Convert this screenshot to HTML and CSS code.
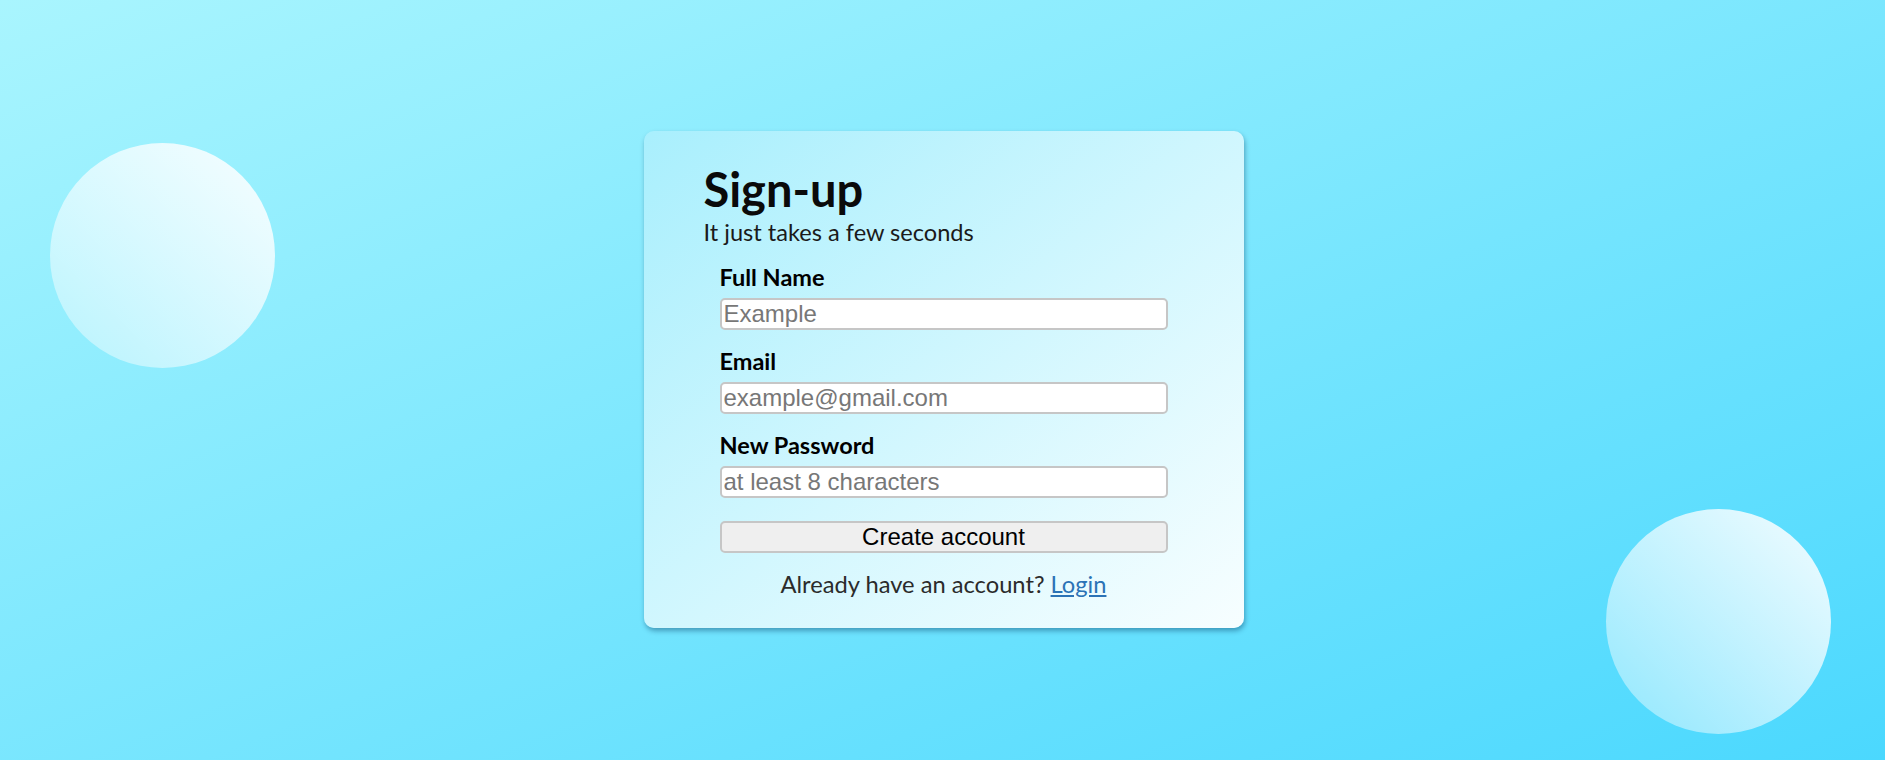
FILE: index.html
```html
<!DOCTYPE html>
<html lang="en">
<head>
<meta charset="utf-8">
<title>Sign-up</title>
<link rel="stylesheet" href="styles.css">
</head>
<body>
<div class="bubble bubble-left"></div>
<div class="bubble bubble-right"></div>
<main class="card">
  <header class="card-head">
    <h1 class="title">Sign-up</h1>
    <p class="subtitle">It just takes a few seconds</p>
  </header>
  <form class="form">
    <div class="field">
      <label class="label" for="name">Full Name</label>
      <input class="input" id="name" type="text" placeholder="Example">
    </div>
    <div class="field">
      <label class="label" for="email">Email</label>
      <input class="input" id="email" type="email" placeholder="example@gmail.com">
    </div>
    <div class="field">
      <label class="label" for="pass">New Password</label>
      <input class="input" id="pass" type="password" placeholder="at least 8 characters">
    </div>
    <button class="submit" type="button">Create account</button>
  </form>
  <p class="footer">Already have an account? <a class="link" href="#">Login</a></p>
</main>
</body>
</html>
```
FILE: styles.css
```css
html, body {
  margin: 0;
  padding: 0;
  height: 100%;
}

body {
  position: relative;
  overflow: hidden;
  min-height: 100vh;
  display: flex;
  align-items: center;
  justify-content: center;
  background: linear-gradient(to bottom right, #a9f5fe, #4bd8fe);
  font-family: Lato, "Noto Sans", sans-serif;
}

.bubble {
  position: absolute;
  width: 225px;
  height: 225px;
  border-radius: 50%;
  background: linear-gradient(to top right, rgba(255, 255, 255, 0.35), rgba(255, 255, 255, 0.92));
}

.bubble-left {
  left: 50px;
  top: 143px;
}

.bubble-right {
  left: 1606px;
  top: 509px;
}

.card {
  position: relative;
  width: 600px;
  box-sizing: border-box;
  padding: 32px 60px 30px 60px;
  border-radius: 10px;
  background: linear-gradient(to bottom right, #a9effd, #f7feff);
  box-shadow: 1px 3px 5px rgba(0, 50, 90, 0.4);
  margin-left: 2px;
  margin-top: -2px;
}

.card-head {
  margin-bottom: 17px;
}

.title {
  margin: 0;
  font-size: 47px;
  font-weight: 700;
  line-height: 53px;
  color: #0a0a0a;
}

.subtitle {
  margin: 2px 0 0 0;
  font-size: 23.6px;
  line-height: 28px;
  color: #1a1a1a;
}

.form {
  display: flex;
  flex-direction: column;
  width: 448px;
  margin: 0 auto;
}

.field {
  display: flex;
  flex-direction: column;
  margin-bottom: 17px;
}

.field:last-of-type {
  margin-bottom: 23px;
}

.label {
  font-size: 23.5px;
  font-weight: 700;
  line-height: 28px;
  color: #000;
  margin-bottom: 7px;
}

.input {
  box-sizing: border-box;
  height: 32px;
  width: 100%;
  margin: 0;
  padding: 1px 2px;
  border: 2px solid #c6c6c6;
  border-radius: 5px;
  background: #fff;
  font-family: "Liberation Sans", Arial, sans-serif;
  font-size: 24px;
  color: #000;
  outline: none;
}

.input::placeholder {
  color: #777;
}

.submit {
  box-sizing: border-box;
  height: 32px;
  width: 100%;
  margin: 0;
  padding: 0;
  border: 2px solid #c6c6c6;
  border-radius: 5px;
  background: #efefef;
  font-family: "Liberation Sans", Arial, sans-serif;
  font-size: 24px;
  color: #000;
}

.footer {
  margin: 17px 0 0 0;
  text-align: center;
  font-size: 23.7px;
  line-height: 28px;
  color: #2b2b2b;
}

.link {
  color: #2b73b6;
  text-decoration: underline;
}
```
